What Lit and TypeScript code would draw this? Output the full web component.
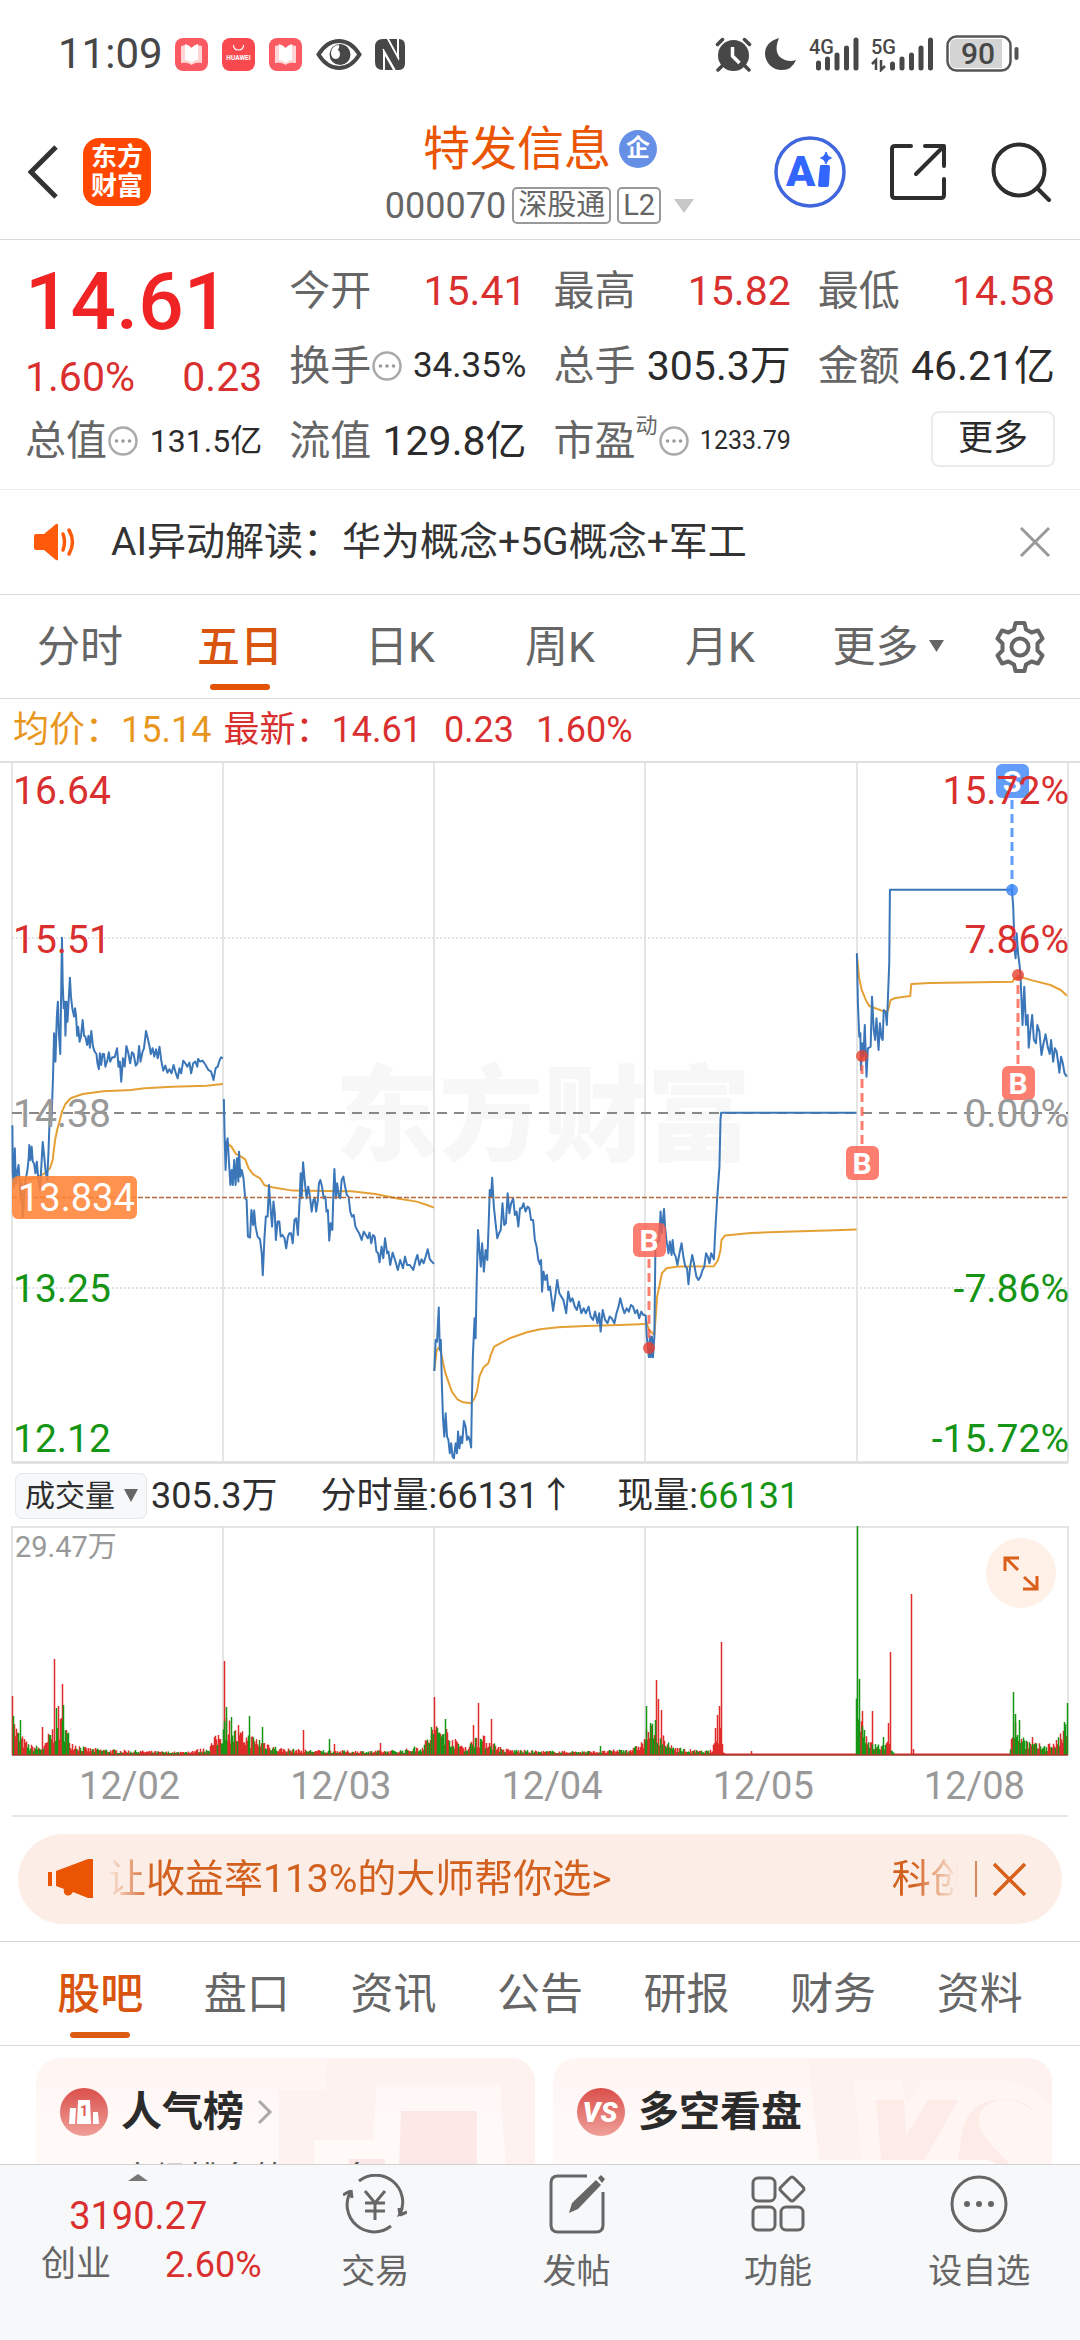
import { LitElement, html, svg, css, nothing } from "lit";
import { customElement, property, state } from "lit/decorators.js";
import { classMap } from "lit/directives/class-map.js";

const FONT = css`"Roboto", "Noto Sans CJK SC", sans-serif`;

const base = css`
  :host, * { box-sizing: border-box; }
  button {
    font: inherit; color: inherit; background: none; border: 0; padding: 0; margin: 0;
    display: flex; align-items: center; justify-content: center;
  }
  svg { display: block; flex: none; }
`;

/* ---------- status bar ---------- */
@customElement("status-bar")
class StatusBar extends LitElement {
  static styles = [base, css`
    :host { display: flex; justify-content: space-between; align-items: center; height: 108px; padding: 0 60px 0 58px; color: #474747; }
    .group { display: flex; align-items: center; gap: 12px; }
    .time { font-size: 42px; line-height: 48px; }
    .book { margin-right: 2px; }
  `];

  private book() {
    return html`<svg class="book" width="33" height="33" viewBox="0 0 33 33">
      <rect width="33" height="33" rx="8" fill="#fb5a62"/>
      <path d="M6 8q5-2 9 1l1.500 1 1.500-1q4-3 9-1v17q-5-1-9 1l-1.500 1-1.500-1q-4-2-9-1z" fill="#ffd5d5"/>
      <path d="M10 6q4 1 6.500 4 2.500-3 6.500-4v16q-4 0-6.500 3-2.500-3-6.500-3z" fill="#fff"/>
    </svg>`;
  }

  render() {
    return html`
      <div class="group">
        <span class="time">11:09</span>
        ${this.book()}
        <svg class="book" width="33" height="33" viewBox="0 0 33 33">
          <rect width="33" height="33" rx="8" fill="#f9494f"/>
          <path d="M11.500 7q0 5 5 5t5-5" fill="none" stroke="#fff" stroke-width="1.200"/>
          <text x="16.500" y="21.500" font-size="6.500" font-weight="700" fill="#fff" text-anchor="middle">HUAWEI</text>
        </svg>
        ${this.book()}
        <svg width="46" height="33" viewBox="0 0 46 33">
          <path d="M2.500 16.500Q11 3 23 3t20.500 13.500Q35 30 23 30T2.500 16.500z" fill="none" stroke="#474747" stroke-width="4"/>
          <circle cx="24" cy="16.500" r="10.500" fill="#474747"/>
          <path d="M23 7a8 8 0 0 0-8 8q0 5 4 6 5 0 5-5 0-3-2-4 2-3 1-5z" fill="#fff"/>
        </svg>
        <svg width="32" height="33" viewBox="0 0 32 33">
          <path d="M9 1h4l12 22V1q6 0 6 7v17q0 7-6 7h-4L9 11v21q-8 0-8-8V9q0-8 8-8z" fill="#474747"/>
          <path d="M15 1h8v15zM11 32h8l-8-14z" fill="#474747"/>
          <path d="M14 1l11 20M9 11l12 21" stroke="#fff" stroke-width="1.500"/>
        </svg>
      </div>
      <div class="group">
        <svg width="37" height="35" viewBox="0 0 37 35">
          <circle cx="18.500" cy="18.500" r="15.500" fill="#474747"/>
          <path d="M2.500 7.500l5-5M34.500 7.500l-5-5M7 29l-4 4M30 29l4 4" stroke="#474747" stroke-width="3.500" fill="none" stroke-linecap="round"/>
          <path d="M17.500 10v9l7 7" stroke="#fff" stroke-width="3.500" fill="none"/>
        </svg>
        <svg width="33" height="34" viewBox="0 0 33 34"><path d="M15 1Q8 18 21 23q6 2 11 0-4 10-14 10A16.500 16.500 0 0 1 1 17Q1 5 15 1z" fill="#474747"/></svg>
        <svg width="50" height="36" viewBox="0 0 50 36">
          <text x="0" y="18" font-size="20" font-weight="500" fill="#474747">4G</text>
          <g stroke="#474747" stroke-width="5" stroke-linecap="round"><path d="M9.500 27v5M18.500 23v9M28 19v13M37.500 12v20M47 4v28"/></g>
        </svg>
        <svg width="63" height="36" viewBox="0 0 63 36">
          <text x="0" y="18" font-size="20" font-weight="500" fill="#474747">5G</text>
          <path d="M5 34V24l-4 4M10 24v10l4-4" stroke="#474747" stroke-width="2.500" fill="none"/>
          <g stroke="#474747" stroke-width="5" stroke-linecap="round"><path d="M21.500 28v4M31 23v9M40.500 19v13M50 12v20M59.500 4v28"/></g>
        </svg>
        <svg width="74" height="38" viewBox="0 0 74 38">
          <rect x="1.500" y="1.500" width="63" height="34" rx="9" fill="#fff" stroke="#555" stroke-width="2.500"/>
          <path d="M10 4h46v29H10q-6 0-6-6V10q0-6 6-6z" fill="#d4d4d4"/>
          <path d="M70.500 14v9" stroke="#555" stroke-width="4" stroke-linecap="round"/>
          <text x="32" y="29" font-size="30" font-weight="500" fill="#474747" text-anchor="middle">90</text>
        </svg>
      </div>`;
  }
}

/* ---------- title bar ---------- */
@customElement("stock-header")
class StockHeader extends LitElement {
  static styles = [base, css`
    :host { display: grid; grid-template-columns: 1fr auto 1fr; align-items: center; height: 132px; padding: 0 28px 4px; border-bottom: 1px solid #d9d9d9; }
    .left { display: flex; align-items: center; gap: 23px; }
    .logo { width: 68px; height: 68px; border-radius: 16px; background: #ff4700; color: #fff; font-size: 26px; line-height: 29px; font-weight: 700; display: flex; align-items: center; justify-content: center; text-align: center; }
    .mid { display: flex; flex-direction: column; align-items: center; gap: 10px; padding-top: 2px; }
    .name { display: flex; align-items: center; gap: 8px; font-size: 47px; line-height: 56px; color: #ea5504; font-weight: 400; margin: 0; }
    .badge { width: 38px; height: 38px; border-radius: 50%; background: #6690e6; color: #fff; font-size: 24px; line-height: 36px; font-weight: 700; text-align: center; }
    .sub { gap: 6px; font-size: 36px; line-height: 38px; color: #666; }
    .tag { border: 2px solid #999; border-radius: 5px; font-size: 29px; line-height: 33px; padding: 0 4px; }
    .arrow { margin-left: 6px; }
    .right { display: flex; align-items: center; justify-content: flex-end; gap: 42px; }
  `];
  render() {
    return html`
      <div class="left">
        <button aria-label="返回"><svg width="32" height="56" viewBox="0 0 32 56"><path d="M28 3L3 28l25 25" fill="none" stroke="#333" stroke-width="5"/></svg></button>
        <div class="logo">东方<br>财富</div>
      </div>
      <div class="mid">
        <h1 class="name">特发信息<span class="badge">企</span></h1>
        <button class="sub">
          <span>000070</span><span class="tag">深股通</span><span class="tag">L2</span>
          <svg class="arrow" width="22" height="16" viewBox="0 0 22 16"><path d="M1 1h20L11 15z" fill="#c8c8c8"/></svg>
        </button>
      </div>
      <div class="right">
        <button aria-label="AI">
          <svg width="72" height="72" viewBox="0 0 72 72">
            <circle cx="36" cy="36" r="34" fill="none" stroke="#3f66dd" stroke-width="3.500"/>
            <text x="12" y="50" font-size="43" font-weight="900" fill="#3366ff">A</text>
            <path d="M46 30q0-1 2-1h6q2 0 2 2l-1 18q0 2-2 2h-7q-2 0-2-2z" fill="#3366ff"/>
            <path d="M52 16q1 5 5.500 6-4.500 1-5.500 6-1-5-5.500-6 4.500-1 5.500-6z" fill="#3366ff" stroke="#3366ff"/>
          </svg>
        </button>
        <button aria-label="分享">
          <svg width="60" height="60" viewBox="0 0 60 60"><path d="M23 4H7q-3 0-3 3v46q0 3 3 3h46q3 0 3-3V37M37 4h19v20M55 5L28 32" fill="none" stroke="#2e2e2e" stroke-width="4" stroke-linejoin="round" stroke-linecap="round"/></svg>
        </button>
        <button aria-label="搜索">
          <svg width="62" height="60" viewBox="0 0 62 60"><circle cx="29" cy="28" r="25.500" fill="none" stroke="#2e2e2e" stroke-width="4"/><path d="M47 46l12 12" stroke="#2e2e2e" stroke-width="4" stroke-linecap="round"/></svg>
        </button>
      </div>`;
  }
}

/* ---------- quote figures ---------- */
interface Quote { label: string; value: string; size?: string; tone?: string; hint?: boolean; mark?: string; }

@customElement("quote-panel")
class QuotePanel extends LitElement {
  static styles = [base, css`
    :host { display: grid; grid-template-columns: repeat(4, 1fr); column-gap: 27px; padding: 13px 25px 11px; border-bottom: 1px solid #ececec; color: #2b2b2b; }
    .price { height: 98px; font-size: 80px; line-height: 98px; font-weight: 500; color: #f02424; }
    .change { height: 52px; display: flex; align-items: center; justify-content: space-between; font-size: 41px; line-height: 48px; color: #d9302f; }
    .row { height: 75px; display: flex; align-items: center; line-height: 48px; font-size: 41px; }
    .label { color: #666; display: flex; align-items: center; white-space: nowrap; }
    .value { margin-left: auto; white-space: nowrap; }
    .red { color: #d9302f; }
    .md { font-size: 35px; }
    .sm { font-size: 32px; }
    .xs { font-size: 25px; }
    .mark { font-size: 22px; line-height: 18px; align-self: flex-start; }
    .more { width: 124px; height: 56px; margin: 8px 0 0 auto; border: 2px solid #ebebeb; border-radius: 8px; font-size: 35px; line-height: 40px; }
  `];

  private columns: Quote[][] = [
    [{ label: "今开", value: "15.41", tone: "red" }, { label: "换手", value: "34.35%", size: "md", hint: true }, { label: "流值", value: "129.8亿" }],
    [{ label: "最高", value: "15.82", tone: "red" }, { label: "总手", value: "305.3万" }, { label: "市盈", value: "1233.79", size: "xs", hint: true, mark: "动" }],
    [{ label: "最低", value: "14.58", tone: "red" }, { label: "金额", value: "46.21亿" }],
  ];

  private row(q: Quote) {
    return html`<div class="row">
      <span class="label">${q.label}${q.mark ? html`<span class="mark">${q.mark}</span>` : nothing}
        ${q.hint ? html`<svg width="32" height="32" viewBox="0 0 32 32"><circle cx="16" cy="16" r="13.500" fill="none" stroke="#aaa" stroke-width="2.500"/><g fill="#999"><circle cx="9.500" cy="16" r="1.800"/><circle cx="16" cy="16" r="1.800"/><circle cx="22.500" cy="16" r="1.800"/></g></svg>` : nothing}
      </span>
      <span class="value ${q.size ?? ""} ${q.tone ?? ""}">${q.value}</span>
    </div>`;
  }

  render() {
    return html`
      <div>
        <div class="price">14.61</div>
        <div class="change"><span>1.60%</span><span>0.23</span></div>
        ${this.row({ label: "总值", value: "131.5亿", size: "sm", hint: true })}
      </div>
      ${this.columns.map((c, i) => html`<div>${c.map((q) => this.row(q))}${i === 2 ? html`<button class="more">更多</button>` : nothing}</div>`)}`;
  }
}

/* ---------- AI notice ---------- */
@customElement("notice-bar")
class NoticeBar extends LitElement {
  static styles = [base, css`
    :host { display: flex; align-items: center; height: 105px; padding: 0 28px 0 33px; border-bottom: 1px solid #d9d9d9; color: #333; }
    .text { margin-left: 32px; margin-right: auto; font-size: 39px; line-height: 48px; }
  `];
  render() {
    return html`
      <svg width="46" height="38" viewBox="0 0 46 38">
        <path d="M3 11h8L23 1q2-1 2 1v34q0 2-2 1L11 27H3q-2 0-2-2V13q0-2 2-2z" fill="#ff5a0a"/>
        <path d="M30 11q3 8 0 16M36 7q7 12 0 24" fill="none" stroke="#ff5a0a" stroke-width="3.500" stroke-linecap="round"/>
      </svg>
      <span class="text">AI异动解读：华为概念+5G概念+军工</span>
      <button aria-label="关闭"><svg width="34" height="34" viewBox="0 0 34 34"><path d="M3 3l28 28M31 3L3 31" stroke="#999" stroke-width="3"/></svg></button>`;
  }
}

/* ---------- chart period tabs ---------- */
@customElement("period-tabs")
class PeriodTabs extends LitElement {
  static styles = [base, css`
    :host { display: grid; grid-template-columns: repeat(6, 4fr) 3fr; height: 104px; border-bottom: 1px solid #d9d9d9; color: #666; font-size: 43px; line-height: 50px; }
    .tab { position: relative; gap: 10px; }
    .menu { padding-left: 16px; }
    .on { color: #d9550f; font-weight: 500; }
    .on::after { content: ""; position: absolute; bottom: 8px; left: calc(50% - 30px); width: 60px; height: 6px; border-radius: 3px; background: #e35205; }
  `];
  @state() private active = "五日";
  render() {
    return html`
      ${["分时", "五日", "日K", "周K", "月K", "更多"].map((t) => html`
        <button class=${classMap({ tab: true, menu: t === "更多", on: t === this.active })} @click=${() => (this.active = t)}>${t}${t === "更多"
          ? html`<svg width="15" height="13" viewBox="0 0 15 13"><path d="M0 0h15L7.500 12z" fill="#666"/></svg>` : nothing}</button>`)}
      <button aria-label="设置">
        <svg width="54" height="54" viewBox="0 0 54 54" fill="none" stroke="#666" stroke-width="4" stroke-linejoin="round">
          <path d="M22.500 3h9l1.500 6.500 5.500 3 6.500-2 4.500 8-5 5v7l5 5-4.500 8-6.500-2-5.500 3L31.500 51h-9L21 44.500l-5.500-3-6.500 2-4.500-8 5-5v-7l-5-5 4.500-8 6.500 2 5.500-3z"/>
          <circle cx="27" cy="27" r="8.500"/>
        </svg>
      </button>`;
  }
}

/* ---------- price chart ---------- */
const DAYS = ["12/02", "12/03", "12/04", "12/05", "12/08"];
const GRID_X = [12, 223, 434, 645, 857, 1068];

const PRICE = [
  "36,1126 37,1265 40,1310 43,1195 46,1300 50,1265 54,1245 57,1300 60,1350 63,1300 66,1400 70,1340 74,1290 79,1265 83,1230 85,1185 88,1230 92,1190 95,1235 99,1240 103,1270 107,1235 111,1285 116,1320 120,1250 124,1176 128,1215 132,1260 137,1290 141,1200 146,1055 150,1100 154,980 157,850 161,935 165,800 168,755 171,850 175,912 178,700 180,563 182,700 185,775 188,755 190,857 193,755 196,815 200,740 203,683 206,740 210,775 215,800 218,775 221,800 224,857 227,830 231,875 235,860 240,810 244,857 248,860 253,885 257,857 261,893 265,843 270,890 275,905 280,912 283,940 287,958 290,910 294,945 298,912 302,912 306,950 312,930 316,907 320,935 326,922 333,922 340,895 344,950 348,935 352,995 357,925 362,950 367,888 372,907 378,940 383,907 388,912 394,947 399,940 404,888 408,935 414,905 418,895 424,843 429,865 434,888 438,912 443,895 448,920 453,898 458,925 463,890 468,930 474,962 480,947 486,968 492,958 498,970 504,945 510,968 516,985 521,955 526,970 532,932 538,940 544,950 550,938 555,970 561,940 567,935 573,950 575,927 581,935 588,932 597,945 605,960 613,965 620,990 626,955 632,950 638,930 642,922 647,925",
  "650,1047 652,1150 655,1260 658,1180 661,1165 665,1240 669,1305 673,1260 676,1305 680,1230 684,1305 688,1225 692,1295 694,1205 698,1280 702,1260 707,1285 712,1345 716,1350 720,1460 726,1463 730,1380 735,1425 738,1382 742,1430 748,1460 755,1468 760,1510 763,1576 768,1460 772,1400 777,1400 781,1305 786,1380 790,1430 794,1355 798,1390 801,1470 806,1415 811,1415 815,1460 820,1455 826,1465 831,1495 836,1460 840,1450 845,1450 850,1480 855,1410 860,1405 865,1455 870,1350 873,1270 876,1345 880,1237 885,1295 890,1345 895,1310 900,1340 905,1385 910,1350 914,1345 918,1385 923,1350 926,1300 930,1290 935,1310 940,1345 945,1340 948,1385 952,1380 956,1472 960,1420 965,1440 968,1330 971,1257 975,1345 979,1300 984,1340 988,1345 992,1290 997,1280 1002,1310 1007,1335 1012,1340 1017,1385 1022,1400 1027,1395 1032,1430 1037,1440 1043,1450 1050,1470 1056,1445 1062,1455 1068,1465 1073,1448 1078,1480 1083,1455 1088,1460 1093,1505 1098,1510 1102,1537 1108,1490 1113,1525 1118,1465 1124,1510 1128,1505 1133,1545 1140,1508 1147,1530 1155,1560 1162,1530 1170,1555 1176,1520 1182,1545 1190,1545 1200,1560 1207,1530 1212,1515 1218,1545 1224,1528 1230,1540 1236,1520 1242,1498 1248,1528 1254,1535 1260,1542",
  "1261,1863 1265,1770 1269,1775 1274,1673 1277,1800 1280,1770 1283,1900 1286,2000 1290,2060 1294,1990 1298,2060 1302,2070 1306,2110 1310,2080 1314,2120 1318,2125 1323,2080 1327,2110 1330,2045 1334,2095 1338,2060 1342,2080 1347,2013 1352,2030 1356,2070 1360,2060 1364,2070 1368,2093 1370,1960 1373,1820 1378,1705 1381,1765 1384,1600 1388,1440 1392,1500 1396,1550 1400,1480 1405,1565 1410,1500 1415,1530 1419,1420 1422,1320 1426,1340 1429,1283 1434,1370 1439,1420 1444,1465 1449,1450 1454,1440 1459,1360 1464,1425 1469,1420 1474,1330 1479,1390 1484,1360 1490,1345 1495,1395 1500,1385 1505,1430 1510,1375 1515,1375 1520,1360 1526,1385 1532,1370 1537,1375 1542,1410 1548,1410 1553,1470 1558,1490 1563,1530 1568,1543 1571,1530 1574,1625 1578,1565 1583,1590 1588,1575 1592,1620 1597,1610 1602,1650 1606,1683 1612,1640 1618,1590 1624,1630 1630,1640 1636,1650 1644,1690 1650,1625 1656,1655 1662,1645 1669,1670 1675,1680 1681,1655 1688,1690 1695,1675 1701,1690 1709,1670 1715,1700 1722,1710 1728,1685 1735,1720 1740,1690 1744,1745 1750,1680 1757,1710 1764,1720 1770,1700 1776,1705 1784,1720 1790,1690 1796,1670 1801,1645 1807,1670 1813,1690 1820,1675 1826,1685 1832,1665 1838,1670 1844,1690 1850,1680 1856,1705 1862,1685 1868,1695 1874,1695",
  "1875,1695 1878,1760 1884,1822 1887,1760 1890,1822 1893,1760 1896,1822 1900,1760 1903,1500 1908,1480 1914,1470 1918,1385 1922,1450 1926,1400 1928,1377 1931,1430 1935,1470 1941,1510 1945,1475 1950,1515 1953,1470 1957,1510 1962,1520 1967,1545 1973,1510 1979,1480 1985,1525 1990,1550 1995,1555 1999,1603 2004,1550 2010,1515 2015,1540 2022,1580 2028,1590 2034,1580 2040,1560 2045,1550 2050,1510 2055,1520 2060,1540 2065,1510 2073,1528 2076,1460 2082,1350 2089,1250 2092,1110 2094,1088 2487,1088",
  "2488,610 2491,760 2495,860 2498,850 2500,960 2503,880 2507,920 2511,825 2516,980 2520,895 2528,890 2532,740 2537,840 2541,870 2545,805 2551,900 2555,820 2560,865 2563,870 2566,780 2572,790 2575,825 2578,750 2582,640 2584,419 2938,419 2942,470 2946,600 2949,625 2952,550 2956,610 2961,650 2964,700 2969,825 2974,710 2979,825 2984,795 2987,893 2992,840 2997,795 3002,870 3008,880 3012,825 3018,845 3024,915 3029,885 3036,853 3042,890 3048,912 3052,870 3058,935 3063,895 3068,905 3072,935 3076,968 3081,920 3086,940 3091,970 3098,980",
];
const AVERAGE = [
  "36,1265 60,1290 100,1285 130,1270 145,1255 153,1230 160,1170 167,1135 172,1118 180,1085 190,1062 205,1045 240,1032 300,1024 380,1020 420,1015 500,1010 600,1007 647,1002",
  "650,1173 660,1180 672,1190 685,1212 700,1220 712,1228 722,1255 735,1273 755,1285 768,1306 790,1312 850,1322 950,1323 1020,1324 1090,1332 1150,1345 1210,1355 1240,1365 1260,1373",
  "1261,1863 1268,1800 1277,1790 1285,1830 1292,1865 1300,1890 1312,1925 1328,1948 1345,1957 1368,1960 1378,1945 1385,1925 1392,1880 1404,1852 1418,1840 1425,1815 1435,1790 1480,1765 1530,1747 1568,1738 1620,1732 1700,1728 1800,1725 1874,1722",
  "1876,1715 1885,1740 1900,1755 1908,1640 1915,1605 1922,1570 1935,1555 1970,1550 2073,1549 2085,1530 2092,1500 2095,1470 2105,1457 2180,1449 2300,1445 2400,1442 2487,1439",
  "2488,612 2494,680 2502,720 2514,750 2524,768 2560,782 2578,783 2586,750 2600,744 2643,738 2646,702 2700,699 2940,695 2946,685 2965,682 3000,692 3050,705 3080,720 3098,737",
];

@customElement("price-chart")
class PriceChart extends LitElement {
  static styles = [base, css`
    :host { display: block; }
    .legend { display: flex; align-items: center; height: 62px; padding: 0 13px; font-size: 36px; line-height: 44px; color: #d9302f; }
    .avg { color: #e8971e; margin-right: 12px; }
    .gap { margin-left: 22px; }
    .plot { width: 100%; height: auto; font-size: 39px; }
    .series { fill: none; stroke-width: 2; stroke-linejoin: round; }
    .series polyline { vector-effect: non-scaling-stroke; }
    .flag { font-size: 30px; font-weight: 700; fill: #fff; text-anchor: middle; }
    .watermark { font-size: 104px; font-weight: 900; fill: #f7f7f7; text-anchor: middle; }
  `];

  private marker(kind: string, x: number, top: number, dotY: number) {
    const c = kind === "S" ? "#3b86f7" : "#fb5e4c";
    const from = dotY > top ? top + 36 : top - 2;
    return svg`
      <path d="M${x} ${from}V${dotY}" stroke=${c} stroke-width="3" stroke-dasharray="9 5" opacity="0.800"/>
      <circle cx=${x} cy=${dotY} r="6" fill=${kind === "S" ? c : "#e8412f"} opacity="0.800"/>
      <rect x=${x - 16} y=${top} width="33" height="34" rx="6" fill=${c} opacity="0.800"/>
      <text class="flag" x=${x} y=${top + 28}>${kind}</text>`;
  }

  render() {
    return html`
      <div class="legend">
        <span class="avg">均价：15.14</span><span>最新：14.61</span><span class="gap">0.23</span><span class="gap">1.60%</span>
      </div>
      <svg class="plot" viewBox="0 761 1080 704" role="img" aria-label="五日走势">
        <text class="watermark" x="543" y="1153">东方财富</text>
        <g stroke="#dcdcdc" stroke-width="1.500" fill="none">
          <path d="M0 762H1080" stroke="#d4d4d4"/>
          ${GRID_X.map((x) => svg`<path d="M${x} 763V1462"/>`)}
          <path d="M12 1462.500H1068" stroke-width="2.500"/>
          <path d="M12 938H1068M12 1288H1068" stroke-dasharray="2 2"/>
        </g>
        <path d="M12 1113H1068" stroke="#888" stroke-width="2" stroke-dasharray="10 7"/>
        <g class="series" transform="translate(0 750) scale(0.3444 0.3333)">
          ${AVERAGE.map((p) => svg`<polyline points=${p} stroke="#e5a035"/>`)}
          ${PRICE.map((p) => svg`<polyline points=${p} stroke="#3a76b8"/>`)}
        </g>
        <path d="M12 1197.500H1068" stroke="#b5683a" stroke-width="1.500" stroke-dasharray="5 2"/>
        ${this.marker("S", 1012, 764, 890)}
        ${this.marker("B", 1018, 1066, 975)}
        ${this.marker("B", 862, 1146, 1056)}
        ${this.marker("B", 649, 1223, 1348)}
        <g fill="#d9302f"><text x="13" y="804">16.64</text><text x="13" y="953">15.51</text></g>
        <text x="13" y="1127" fill="#999">14.38</text>
        <g fill="#159415"><text x="13" y="1302">13.25</text><text x="13" y="1452">12.12</text></g>
        <g text-anchor="end">
          <g fill="#d9302f"><text x="1069" y="804">15.72%</text><text x="1069" y="953">7.86%</text></g>
          <text x="1069" y="1127" fill="#999">0.00%</text>
          <g fill="#159415"><text x="1069" y="1302">-7.86%</text><text x="1069" y="1452">-15.72%</text></g>
        </g>
        <rect x="12" y="1176" width="125" height="43" rx="6" fill="#ff8336" opacity="0.880"/>
        <text x="18" y="1211" fill="#fff" font-size="38">13.834</text>
      </svg>`;
  }
}

/* ---------- volume chart ---------- */
/* Per day: [minute position 0..1, typical bar height]; bars vary around it. */
const VOLUME_SHAPE: number[][][] = [
  [[0, 40], [0.03, 22], [0.08, 10], [0.15, 8], [0.18, 25], [0.24, 38], [0.28, 14], [0.35, 7], [0.5, 5], [0.8, 3], [0.93, 7], [1, 28]],
  [[0, 42], [0.06, 24], [0.12, 20], [0.2, 14], [0.26, 7], [0.4, 5], [0.7, 4], [0.85, 5], [0.95, 10], [1, 28]],
  [[0, 30], [0.05, 28], [0.1, 15], [0.16, 8], [0.2, 22], [0.27, 14], [0.33, 6], [0.5, 4], [0.8, 4], [0.95, 7], [1, 16]],
  [[0, 26], [0.05, 34], [0.1, 12], [0.18, 6], [0.28, 4], [0.32, 5], [0.33, 24], [0.36, 32], [0.37, 3], [0.38, 1], [1, 1]],
  [[0, 60], [0.03, 34], [0.07, 12], [0.13, 10], [0.16, 14], [0.18, 1], [0.73, 1], [0.74, 40], [0.78, 22], [0.83, 12], [0.9, 10], [0.96, 16], [1, 30]],
];
const VOLUME_SPIKES: [number, number, string][] = [
  [12, 59, "r"], [13, 39, "g"], [20, 35, "g"], [42, 28, "r"], [54, 96, "r"], [56, 47, "g"], [58, 49, "r"], [62, 71, "r"], [63, 50, "g"],
  [224, 94, "r"], [226, 48, "g"], [231, 38, "g"], [238, 30, "r"], [249, 39, "g"], [262, 28, "g"], [303, 25, "r"], [329, 16, "g"], [334, 11, "r"], [380, 12, "r"],
  [434, 58, "r"], [431, 28, "g"], [445, 36, "g"], [473, 30, "r"], [478, 52, "r"], [491, 36, "r"], [600, 9, "g"],
  [646, 49, "g"], [656, 75, "r"], [658, 56, "r"], [661, 45, "r"], [717, 40, "r"], [719, 49, "r"], [721, 113, "r"], [751, 4, "r"],
  [857, 229, "g"], [859, 76, "g"], [862, 44, "r"], [872, 44, "r"], [883, 18, "g"], [888, 32, "r"], [890, 103, "r"], [911, 161, "r"], [913, 6, "r"],
  [1013, 63, "g"], [1015, 41, "g"], [1019, 35, "g"], [1032, 18, "r"], [1064, 33, "g"], [1067, 52, "g"],
];

function volumePaths(): { r: string; g: string } {
  const out: Record<string, string> = { r: "", g: "" };
  let seed = 7;
  const rand = () => (seed = (seed * 16807) % 2147483647) / 2147483647;
  VOLUME_SHAPE.forEach((shape, day) => {
    for (let i = 0; i < 211; i++) {
      const t = i / 210;
      const k = Math.max(1, shape.findIndex((p) => p[0] >= t));
      const [a, b] = [shape[k - 1], shape[k]];
      const mean = a[1] + ((b[1] - a[1]) * (t - a[0])) / (b[0] - a[0]);
      const h = mean <= 1.5 ? 1.5 : Math.max(2, mean * (0.35 + rand() * 0.75));
      const quiet = mean <= 3 || (day === 3 && t > 0.32);
      out[quiet || rand() > 0.38 ? "r" : "g"] += `M${12.5 + day * 211 + i} 1755v-${h.toFixed(1)}`;
    }
  });
  VOLUME_SPIKES.forEach(([x, h, c]) => (out[c] += `M${x + 0.5} 1755v-${h}`));
  return out as { r: string; g: string };
}

@customElement("volume-chart")
class VolumeChart extends LitElement {
  static styles = [base, css`
    :host { display: block; padding-bottom: 17px; }
    .legend { display: flex; align-items: center; height: 61px; padding: 0 15px; font-size: 36px; line-height: 44px; color: #2e2e2e; }
    .picker { position: relative; display: block; margin-right: 4px; }
    .select { appearance: none; width: 132px; height: 46px; padding: 0 0 0 9px; border: 1px solid #e3e6ea; border-radius: 7px; background: #f7f8fa; color: #2e2e2e; font: inherit; font-size: 30px; line-height: 36px; }
    .caret { position: absolute; right: 8px; top: 17px; pointer-events: none; }
    .cell { margin-right: 43px; }
    .green { color: #159415; }
    .frame { position: relative; }
    .plot { width: 100%; height: auto; }
    .expand { position: absolute; right: 24px; top: 12px; width: 70px; height: 70px; border-radius: 50%; background: #fff0e8; }
    .dates { display: grid; grid-template-columns: repeat(5, 1fr); padding-left: 24px; text-align: center; font-size: 38px; line-height: 58px; color: #999; }
    .rule { margin: 0 12px; border-top: 2px solid #e6e6e6; }
  `];
  private bars = volumePaths();
  render() {
    return html`
      <div class="legend">
        <label class="picker">
          <select class="select" aria-label="指标"><option>成交量</option></select>
          <svg class="caret" width="16" height="14" viewBox="0 0 16 14"><path d="M1 0h14L8 13z" fill="#666"/></svg>
        </label>
        <span class="cell">305.3万</span><span class="cell">分时量:66131↑</span><span>现量:<span class="green">66131</span></span>
      </div>
      <div class="frame">
        <svg class="plot" viewBox="0 1526 1080 231" role="img" aria-label="成交量">
          <g stroke="#dcdcdc" stroke-width="1.500" fill="none"><path d="M12 1527H1068"/>${GRID_X.map((x) => svg`<path d="M${x} 1526V1755"/>`)}</g>
          <g stroke-width="1.500" fill="none">
            <path d=${this.bars.r} stroke="#e02b2b"/>
            <path d=${this.bars.g} stroke="#149614"/>
            <path d="M12 1755H1068" stroke="#a03a2c"/>
          </g>
          <text x="15" y="1557" font-size="29" fill="#999">29.47万</text>
        </svg>
        <button class="expand" aria-label="全屏">
          <svg width="36" height="36" viewBox="0 0 36 36" fill="none" stroke="#d9601a" stroke-width="3"><path d="M2 16V3h14M3 3l12 12M20 34h14V21M34 34L21 22"/></svg>
        </button>
      </div>
      <div class="dates">${DAYS.map((d) => html`<span>${d}</span>`)}</div>
      <div class="rule"></div>`;
  }
}

/* ---------- promo ticker ---------- */
@customElement("promo-banner")
class PromoBanner extends LitElement {
  static styles = [base, css`
    :host { display: flex; align-items: center; height: 90px; margin: 0 18px 17px; padding: 0 35px 0 30px; border-radius: 45px; background: #fceee6; color: #d2601f; }
    .ticker { flex: 1; min-width: 0; margin: 0 17px 0 13px; overflow: hidden; display: flex; gap: 280px; white-space: nowrap; font-size: 39px; line-height: 50px;
      mask-image: linear-gradient(to right, transparent, #000 45px, #000 calc(100% - 45px), transparent); }
    .bar { width: 2px; height: 36px; background: #d98a5c; margin-right: 15px; }
  `];
  render() {
    return html`
      <svg width="46" height="40" viewBox="0 0 46 40" fill="#ea5504"><path d="M0 13h4v14H0zM8 12L40 0h5v39h-5l-15-6q-3 5-7 3-3-2-2-6l-8-3z"/></svg>
      <div class="ticker"><span>让收益率113%的大师帮你选&gt;</span><span>科创</span></div>
      <span class="bar"></span>
      <button aria-label="关闭"><svg width="35" height="35" viewBox="0 0 35 35"><path d="M2 2l31 31M33 2L2 33" stroke="#d9601a" stroke-width="3.500"/></svg></button>`;
  }
}

/* ---------- content tabs ---------- */
@customElement("content-tabs")
class ContentTabs extends LitElement {
  static styles = [base, css`
    :host { display: grid; grid-template-columns: repeat(7, 1fr); height: 105px; padding: 0 27px; border-top: 1px solid #d4d4d4; border-bottom: 1px solid #d9d9d9; color: #666; font-size: 43px; line-height: 50px; }
    .tab { position: relative; }
    .on { color: #d9550f; font-weight: 500; }
    .on::after { content: ""; position: absolute; bottom: 7px; left: calc(50% - 30px); width: 60px; height: 6px; border-radius: 3px; background: #dd5c12; }
  `];
  @state() private active = "股吧";
  render() {
    return ["股吧", "盘口", "资讯", "公告", "研报", "财务", "资料"].map((t) => html`
      <button class=${classMap({ tab: true, on: t === this.active })} @click=${() => (this.active = t)}>${t}</button>`);
  }
}

/* ---------- feature cards ---------- */
@customElement("feature-card")
class FeatureCard extends LitElement {
  static styles = [base, css`
    :host { display: block; position: relative; height: 240px; padding: 24px; border-radius: 24px; overflow: hidden; background: linear-gradient(#fff5f3, #fffaf8 80px); }
    .art { position: absolute; right: 0; top: 0; }
    .head { position: relative; gap: 13px; font-size: 41px; line-height: 60px; font-weight: 700; color: #2b2b2b; }
    .body { position: relative; margin: 15px 0 0 62px; font-size: 33px; line-height: 44px; color: #555; }
    .panel { position: relative; margin: 18px 24px 0; height: 90px; border-radius: 20px; background: #fffdfc; }
  `];
  @property() kind = "rank";
  render() {
    const rank = this.kind === "rank";
    return html`
      ${rank
        ? html`<svg class="art" width="260" height="110" viewBox="0 0 260 110"><path d="M52 0h208v110h-29L225 25H102l-4 57H39v28H4V32h46z" fill="#fef2f0"/><path d="M126 53h76v57h-78zM74 101h36v9H74z" fill="#fce8e6"/></svg>`
        : html`<svg class="art" width="244" height="110" viewBox="0 0 244 110"><path d="M0 0h244v110H12z" fill="#fef2f0"/><path d="M46 22h48l4 26 16-26h60q44-4 70 26v62H54z" fill="#fff6f4"/><path d="M68 42h28l2 36 22-36h30l-38 68H74zM230 58q-16-18-38-16-26 6-20 28 6 14 34 40h-58l4-20q2-44 34-48 32-4 44 16z" fill="#fdebe8"/></svg>`}
      <button class="head">
        <svg width="48" height="48" viewBox="0 0 48 48">
          <defs><linearGradient id="g" x2="0" y2="1"><stop offset="0" stop-color="#da4f4b"/><stop offset="1" stop-color="#f0a09a"/></linearGradient></defs>
          <circle cx="24" cy="24" r="24" fill="url(#g)"/>
          ${rank
            ? svg`<path d="M10 20h6l-1 16H9zM18 12h12l1 24H17zM33 24h5l1 12h-6z" fill="#fff"/><text x="24" y="28" font-size="14" font-weight="700" fill="#dc5a55" text-anchor="middle">1</text>`
            : svg`<text x="23" y="34" font-size="28" font-weight="900" font-style="italic" fill="#fff" text-anchor="middle">VS</text>`}
        </svg>
        <span>${rank ? "人气榜" : "多空看盘"}</span>
        ${rank ? html`<svg width="16" height="26" viewBox="0 0 16 26"><path d="M2 2l11 11L2 24" fill="none" stroke="#aaa" stroke-width="3"/></svg>` : nothing}
      </button>
      ${rank ? html`<div class="body">市场排名第100名</div>` : html`<div class="panel"></div>`}`;
  }
}

/* ---------- bottom bar ---------- */
@customElement("bottom-bar")
class BottomBar extends LitElement {
  static styles = [base, css`
    :host { display: grid; grid-template-columns: 274fr repeat(4, 201fr); height: 176px; border-top: 1px solid #d2d2d2; background: #f7f8fa; color: #666; font-size: 34px; line-height: 44px; align-items: start; }
    .index { flex-direction: column; padding: 9px 0 0 2px; color: #d9302f; }
    .value { font-size: 38px; line-height: 50px; margin-top: 10px; }
    .pair { display: flex; align-items: center; gap: 54px; padding-left: 26px; font-size: 36px; line-height: 48px; }
    .muted { color: #666; font-size: 35px; }
    .item { flex-direction: column; padding-top: 9px; gap: 15px; }
  `];
  private item(label: string, icon: unknown) {
    return html`<button class="item"><svg width="64" height="60" viewBox="0 0 64 60" fill="none" stroke="#666" stroke-width="3">${icon}</svg>${label}</button>`;
  }
  render() {
    return html`
      <button class="index">
        <svg width="20" height="7" viewBox="0 0 20 7"><path d="M0 7L10 0l10 7z" fill="#777"/></svg>
        <span class="value">3190.27</span>
        <span class="pair"><span class="muted">创业</span><span>2.60%</span></span>
      </button>
      ${this.item("交易", svg`<path d="M16 7a27 27 0 0 1 41 33l2-1M57 41l7-3M57 42l-1-8M48 52A27 27 0 0 1 8 17M7 17l-7 4M8 16l1 8"/><path d="M22 17l10 12 10-12M32 29v17M22 29h20M22 37h20"/>`)}
      ${this.item("发帖", svg`<path d="M42 2H13q-7 0-7 7v42q0 7 7 7h38q7 0 7-7V18"/><path d="M24 39l3-10L51 6l5 5-23 24z" fill="#666" stroke="none"/><path d="M53 4l3-3 4 4-3 4z" fill="#666" stroke="none"/>`)}
      ${this.item("功能", svg`<rect x="7" y="4" width="22" height="23" rx="5"/><rect x="7" y="33" width="22" height="23" rx="5"/><rect x="35" y="33" width="22" height="23" rx="5"/><path d="M44 4q2-2 4 0l9 9q2 2 0 4l-9 9q-2 2-4 0l-9-9q-2-2 0-4z"/>`)}
      ${this.item("设自选", svg`<circle cx="32" cy="30" r="27"/><g fill="#666" stroke="none"><circle cx="20" cy="30" r="3"/><circle cx="32" cy="30" r="3"/><circle cx="44" cy="30" r="3"/></g>`)}`;
  }
}

@customElement("app-root")
class AppRoot extends LitElement {
  static styles = css`
    :host { display: flex; flex-direction: column; height: 100vh; overflow: hidden; background: #fff; font-family: ${FONT}; }
    .content { flex: 1; min-height: 0; overflow: hidden; }
    .cards { display: grid; grid-template-columns: 1fr 1fr; gap: 18px; padding: 12px 28px 0 36px; }
  `;
  render() {
    return html`
      <main class="content">
        <status-bar></status-bar>
        <stock-header></stock-header>
        <quote-panel></quote-panel>
        <notice-bar></notice-bar>
        <period-tabs></period-tabs>
        <price-chart></price-chart>
        <volume-chart></volume-chart>
        <promo-banner></promo-banner>
        <content-tabs></content-tabs>
        <div class="cards">
          <feature-card kind="rank"></feature-card>
          <feature-card kind="versus"></feature-card>
        </div>
      </main>
      <bottom-bar></bottom-bar>`;
  }
}
